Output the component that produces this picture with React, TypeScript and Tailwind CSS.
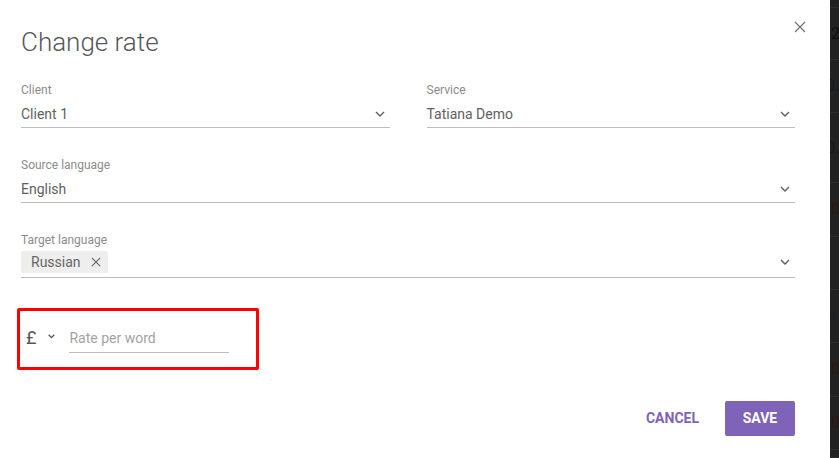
import React from "react";

const Chevron = ({ className = "" }: { className?: string }) => (
  <svg
    className={className}
    width="10"
    height="6"
    viewBox="0 0 10 6"
    fill="none"
    stroke="#5f5f5f"
    strokeWidth="1.4"
  >
    <path d="M1 1l4 4 4-4" />
  </svg>
);

const Cross = ({ size, color }: { size: number; color: string }) => (
  <svg width={size} height={size} viewBox="0 0 12 12" fill="none" stroke={color} strokeWidth="1.3">
    <path d="M1 1l10 10M11 1L1 11" />
  </svg>
);

interface FieldProps {
  label: string;
  value: string;
}

const SelectField: React.FC<FieldProps> = ({ label, value }) => (
  <div className="flex flex-col">
    <span className="text-[12px] leading-[16px] text-[#8c8c8c]">{label}</span>
    <div className="mt-[6px] flex items-center justify-between border-b border-[#bdbdbd] pb-[3px]">
      <span className="text-[14px] leading-[20px] text-[#616161]">{value}</span>
      <Chevron className="mr-[5px]" />
    </div>
  </div>
);

// rows of the table behind the dialog, cut off at the right edge
const stripRows = [
  { h: "h-[8px]", t: "", c: "" },
  { h: "h-[52px]", t: "2", c: "text-[#0e0e0e] ml-[1px]" },
  { h: "h-[53px]", t: "0.", c: "text-[#101a24] -ml-[4px]" },
  { h: "h-[70px]", t: "0.", c: "text-[#101a24] -ml-[4px]" },
  { h: "h-[54px]", t: "0", c: "text-[#2e1515] ml-[1px]" },
  { h: "h-[53px]", t: "", c: "" },
  { h: "h-[53px]", t: "s", c: "text-[#14202c] -ml-[2px]" },
  { h: "h-[54px]", t: "0", c: "text-[#2e1515] ml-[1px]" },
  { h: "h-[53px]", t: "0", c: "text-[#2e1515] ml-[1px]" },
  { h: "h-[8px]", t: "", c: "" },
];

export default function App() {
  return (
    <div className="flex h-[458px] w-full overflow-hidden bg-white font-['Roboto',sans-serif]">
      <div className="relative flex w-[830px] shrink-0 flex-col bg-white pl-[21px] pr-[35px] pt-[26px]">
        <button className="absolute right-[24px] top-[21px]">
          <Cross size={12} color="#757575" />
        </button>

        <h1 className="text-[26px] font-light leading-[32px] text-[#575757]">Change rate</h1>

        <div className="mt-[24px] grid grid-cols-2 gap-x-[37px]">
          <SelectField label="Client" value="Client 1" />
          <SelectField label="Service" value="Tatiana Demo" />
        </div>

        <div className="mt-[29px]">
          <SelectField label="Source language" value="English" />
        </div>

        <div className="mt-[29px] flex flex-col">
          <span className="text-[12px] leading-[16px] text-[#8c8c8c]">Target language</span>
          <div className="mt-[3px] flex items-center justify-between border-b border-[#bdbdbd] pb-[4px]">
            <span className="flex h-[22px] items-center gap-[10px] rounded-[2px] bg-[#eeeeee] pl-[10px] pr-[7px] text-[14px] text-[#666666]">
              Russian
              <Cross size={10} color="#666666" />
            </span>
            <Chevron className="mr-[5px]" />
          </div>
        </div>

        <div className="-ml-[4px] mt-[30px] h-[62px] w-[242px] rounded-[2px] border-[3px] border-[#ff0000]">
          <div className="flex items-start pl-[6px] pt-[15px]">
            <span className="text-[18px] leading-[24px] text-[#555555]">£</span>
            <svg className="ml-[12px] mt-[8px]" width="7" height="5" viewBox="0 0 7 5" fill="none" stroke="#555555" strokeWidth="1.3">
              <path d="M0.7 0.8l2.8 2.8 2.8-2.8" />
            </svg>
            <div className="ml-[14px] w-[160px] border-b border-[#bdbdbd] pb-[2px]">
              <span className="text-[14px] leading-[20px] text-[#a3a3a3]">Rate per word</span>
            </div>
          </div>
        </div>

        <div className="mt-[31px] flex items-center justify-end gap-[10px]">
          <button className="h-[35px] px-[16px] text-[14px] font-bold text-[#7e63b8]">CANCEL</button>
          <button className="h-[35px] w-[70px] rounded-[2px] bg-[#7e63b8] text-[14px] font-bold text-white">
            SAVE
          </button>
        </div>
      </div>

      <div className="flex flex-1 flex-col overflow-hidden bg-[#212121]">
        {stripRows.map((r, i) => (
          <div
            key={i}
            className={`${r.h} flex shrink-0 items-center whitespace-nowrap border-b border-[#2c2c2c] text-[16px]`}
          >
            <span className={r.c}>{r.t}</span>
          </div>
        ))}
      </div>
    </div>
  );
}
